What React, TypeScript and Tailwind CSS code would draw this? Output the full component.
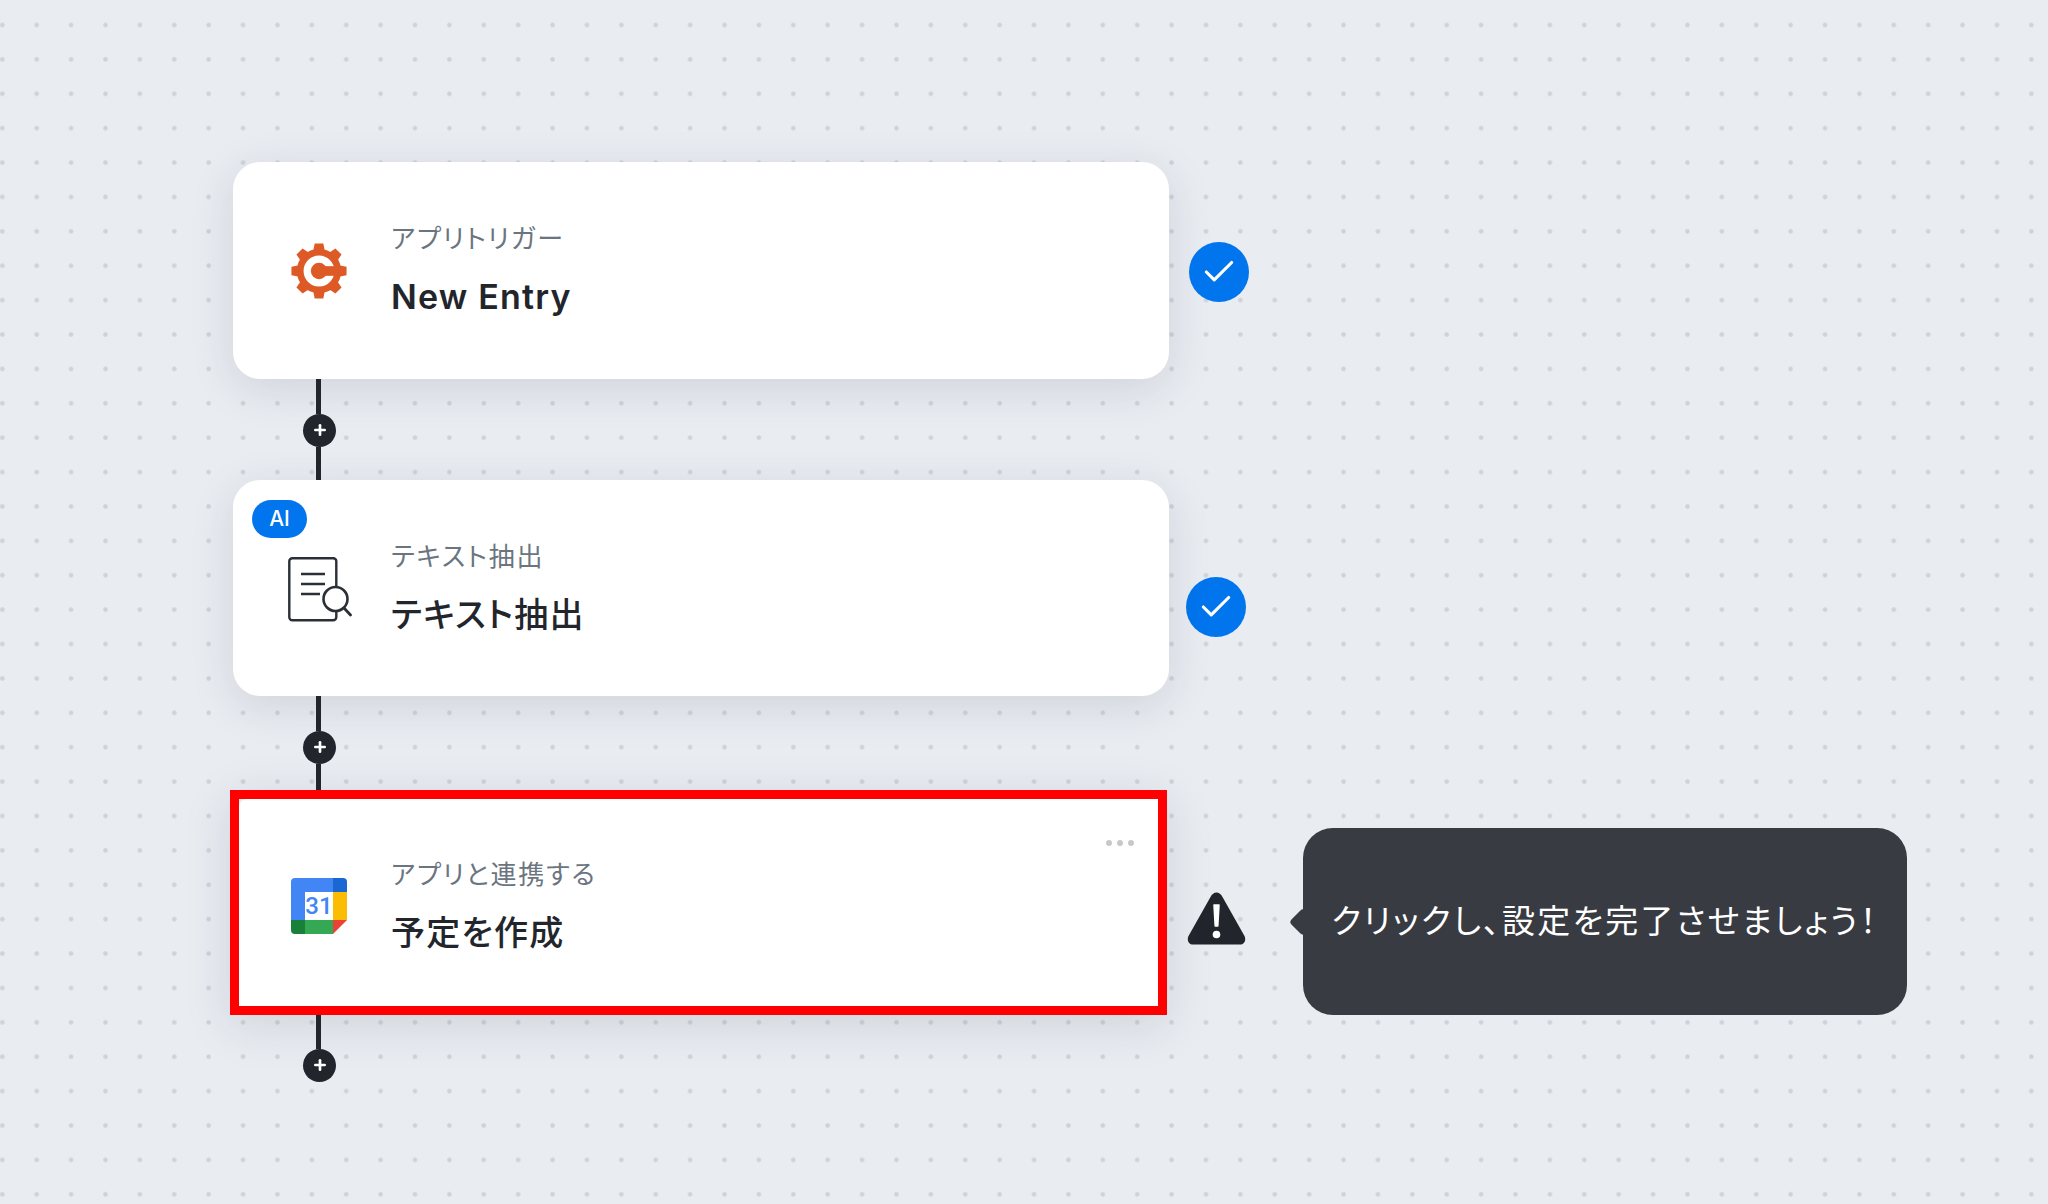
import { Check, Plus } from "lucide-react"
import type { ReactNode } from "react"

const cardShadow = "shadow-[0_10px_44px_rgba(40,50,70,0.13)]"

function GearLogo() {
  return (
    <svg width="60" height="60" viewBox="0 0 60 60" className="block">
      {[0, 45, 90, 135, 180, 225, 270, 315].map((deg) => (
        <path key={deg} d="M25.500 1.500h9l2 11h-13z" fill="#dd5a26" transform={`rotate(${deg} 30 30)`} />
      ))}
      <circle cx="30" cy="30" r="23" fill="#dd5a26" />
      <circle cx="30" cy="30" r="12.2" fill="none" stroke="#fff" strokeWidth="7.5" />
      <rect x="30" y="25" width="20" height="10" fill="#dd5a26" />
    </svg>
  )
}

function DocSearchIcon() {
  return (
    <svg width="64" height="66" viewBox="0 0 64 66" fill="none" stroke="#2b2f36" className="block">
      <rect x="1.3" y="1.3" width="47" height="62" rx="3" strokeWidth="2.4" />
      <path d="M13 17h24M13 27h24M13 37h19" strokeWidth="2.6" />
      <circle cx="47.5" cy="42" r="12" fill="#fff" strokeWidth="2.6" />
      <path d="M56 51l6.5 7" strokeWidth="2.8" strokeLinecap="round" />
    </svg>
  )
}

function CalendarLogo() {
  return (
    <svg width="56" height="56" viewBox="0 0 56 56" className="block">
      <path d="M4 0h38v14H14v28H0V4a4 4 0 0 1 4-4z" fill="#4285f4" />
      <path d="M42 0h10a4 4 0 0 1 4 4v10H42z" fill="#1967d2" />
      <rect x="42" y="14" width="14" height="28" fill="#fbbc04" />
      <rect x="14" y="42" width="28" height="14" fill="#34a853" />
      <path d="M0 42h14v14H4a4 4 0 0 1-4-4z" fill="#188038" />
      <path d="M42 42h14L42 56z" fill="#ea4335" />
      <text x="28" y="36" textAnchor="middle" fontFamily="Roboto, sans-serif" fontWeight="500" fontSize="24" fill="#4285f4">31</text>
    </svg>
  )
}

function WarningIcon() {
  return (
    <svg width="59" height="53" viewBox="0 0 59 53" className="block">
      <path d="M23.500 5 1.500 44C-0.500 48.500 2 52.500 6 52.500h47c4 0 6.500-4 4.500-8.500L35.500 5c-2.800-6-9.200-6-12 0z" fill="#22262c" />
      <path d="M27 13h5l-1.200 21h-2.600z" fill="#fff" stroke="#fff" strokeWidth="1.500" strokeLinejoin="round" />
      <circle cx="29.500" cy="42.500" r="3.800" fill="#fff" />
    </svg>
  )
}

function StepText({ label, title, titleWeight }: { label: string; title: string; titleWeight: string }) {
  return (
    <div className="flex flex-col">
      <span className="text-[26px] leading-[36px] tracking-[1.800px] text-[#6b7580]">{label}</span>
      <span className={`mt-[20px] text-[34px] leading-[40px] tracking-[1.200px] text-[#22262c] ${titleWeight}`}>{title}</span>
    </div>
  )
}

function StepCheck({ className }: { className: string }) {
  return (
    <div className={`flex h-[60px] w-[60px] shrink-0 items-center justify-center rounded-full bg-[#0075ee] ${className}`}>
      <Check size={38} strokeWidth={2} color="#fff" />
    </div>
  )
}

function Connector({ top, bottom }: { top: string; bottom?: string }) {
  return (
    <div className="relative z-10 ml-[70px] flex w-[33px] flex-col items-center">
      <div className={`-ml-[2px] w-[5px] bg-[#22262c] ${top}`} />
      <div className="flex h-[33px] w-[33px] items-center justify-center rounded-full bg-[#22262c]">
        <Plus size={16} strokeWidth={4} color="#fff" />
      </div>
      {bottom && <div className={`-ml-[2px] w-[5px] bg-[#22262c] ${bottom}`} />}
    </div>
  )
}

function IconSlot({ children }: { children: ReactNode }) {
  return <div className="flex w-[58px] shrink-0 items-center justify-center">{children}</div>
}

export default function App() {
  return (
    <div className="h-[1204px] w-[2048px] overflow-hidden bg-[#e9ecf1] bg-[radial-gradient(circle,#ced3da_1.800px,transparent_2.800px)] bg-[size:34.400px_34.400px] bg-[position:-14.900px_7.800px] pl-[233px] pt-[162px] font-[Inter,'Noto_Sans_CJK_JP',sans-serif] [font-feature-settings:'palt']">
      {/* trigger */}
      <div className="flex items-start">
        <div className={`flex h-[217px] w-[936px] items-center gap-[43px] rounded-[27px] bg-white pl-[57px] ${cardShadow}`}>
          <IconSlot><GearLogo /></IconSlot>
          <div className="-mt-[4px]">
            <StepText label="アプリトリガー" title="New Entry" titleWeight="font-semibold" />
          </div>
        </div>
        <StepCheck className="ml-[20px] mt-[80px]" />
      </div>

      <Connector top="h-[34.500px]" bottom="h-[33.500px]" />

      {/* AI step */}
      <div className="flex items-start">
        <div className={`relative flex h-[216px] w-[936px] items-center gap-[43px] rounded-[27px] bg-white pl-[57px] ${cardShadow}`}>
          <span className="absolute left-[19px] top-[20px] flex h-[38px] w-[55px] items-center justify-center rounded-full bg-[#0075ee] text-[21px] font-medium text-white">
            AI
          </span>
          <IconSlot><div className="ml-[1px] mt-[4px]"><DocSearchIcon /></div></IconSlot>
          <div className="-mt-[3px]">
            <StepText label="テキスト抽出" title="テキスト抽出" titleWeight="font-medium" />
          </div>
        </div>
        <StepCheck className="ml-[17px] mt-[97px]" />
      </div>

      <Connector top="h-[34.500px]" bottom="h-[26.500px]" />

      {/* highlighted step */}
      <div className="-ml-[3px] flex items-start">
        <div className={`relative h-[225px] w-[937px] border-[9px] border-[#ff0000] bg-[#e6e9ee] ${cardShadow}`}>
          <div className="relative flex h-full items-center gap-[43px] rounded-tl-[8px] bg-white pl-[51px]">
            <div className="absolute right-[24px] top-[41px] flex gap-[5px]">
              <span className="h-[6px] w-[6px] rounded-full bg-[#c6c8cb]" />
              <span className="h-[6px] w-[6px] rounded-full bg-[#c6c8cb]" />
              <span className="h-[6px] w-[6px] rounded-full bg-[#c6c8cb]" />
            </div>
            <IconSlot><div className="mt-[7px]"><CalendarLogo /></div></IconSlot>
            <div className="mt-[4px]">
              <StepText label="アプリと連携する" title="予定を作成" titleWeight="font-medium" />
            </div>
          </div>
        </div>
        <div className="ml-[20px] mt-[102px] shrink-0">
          <WarningIcon />
        </div>
        <div className="relative ml-[57px] mt-[38px] flex h-[187px] w-[604px] items-center justify-center rounded-[30px] bg-[#383b42] text-[33px] tracking-[2.300px] text-white">
          <span className="absolute -left-[10px] top-[84px] h-[20px] w-[20px] rotate-45 rounded-[4px] bg-[#383b42]" />
          <span className="relative">クリックし、設定を完了させましょう！</span>
        </div>
      </div>

      <Connector top="h-[33.500px]" />
    </div>
  )
}
